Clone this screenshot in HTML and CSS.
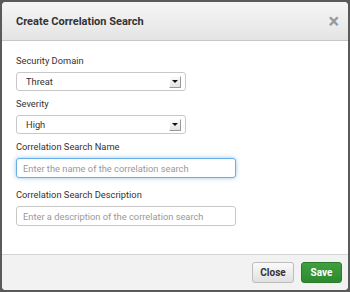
FILE: index.html
```html
<!DOCTYPE html>
<html lang="en">
<head>
    <meta charset="UTF-8">
    <title>Create Correlation Search</title>
    <link rel="stylesheet" href="styles.css">
</head>
<body>

    <div class="modal">
        <div class="modalHeader">
            <span class="modalTitle">Create Correlation Search</span>
            <span class="modalClose">&times;</span>
        </div>

        <div class="modalBody">
            <label class="fieldName">Security Domain</label>
            <div class="selectBox">
                <span class="selectValue">Threat</span>
                <span class="selectBtn"><span class="caret"></span></span>
            </div>

            <label class="fieldName">Severity</label>
            <div class="selectBox">
                <span class="selectValue">High</span>
                <span class="selectBtn"><span class="caret"></span></span>
            </div>

            <label class="fieldName">Correlation Search Name</label>
            <input class="textField focused" type="text" placeholder="Enter the name of the correlation search">

            <label class="fieldName fieldGap">Correlation Search Description</label>
            <input class="textField" type="text" placeholder="Enter a description of the correlation search">
        </div>

        <div class="modalFooter">
            <span class="btn btnClose">Close</span>
            <span class="btn btnSave">Save</span>
        </div>
    </div>

</body>
</html>
```

FILE: styles.css
```css
html {
    margin: 0;
    padding: 0;
}

body {
    margin: 0;
    padding: 2px 2px 2px 2px;
    background-color: #5a5a5a;
    font-family: Roboto, "Liberation Sans", sans-serif;
    color: #333;
    height: 292px;
    box-sizing: border-box;
    overflow: hidden;
}

.modal {
    display: flex;
    flex-direction: column;
    height: 288px;
    background-color: #fff;
    border-radius: 4px;
    overflow: hidden;
}

.modalHeader {
    display: flex;
    align-items: center;
    justify-content: space-between;
    height: 38px;
    padding: 0 9px 0 14px;
    background: linear-gradient(#f6f6f6, #e4e4e4);
    border-bottom: 1px solid #c6c6c6;
}

.modalTitle {
    font-size: 11px;
    font-weight: bold;
    color: #333;
}

.modalClose {
    font-size: 20px;
    font-weight: bold;
    color: #999;
    line-height: 20px;
}

.modalBody {
    flex: 1;
    display: flex;
    flex-direction: column;
    align-items: flex-start;
    padding: 13px 14px 0 14px;
}

.fieldName {
    font-size: 9.3px;
    color: #333;
    line-height: 14px;
    margin-bottom: 4px;
}

.fieldGap {
    margin-top: 4px;
}

.selectBox {
    box-sizing: border-box;
    display: flex;
    align-items: center;
    justify-content: space-between;
    width: 170px;
    height: 19px;
    margin-bottom: 6px;
    padding: 0 4px 0 9px;
    border: 1px solid #c8c8c8;
    border-radius: 3px;
    font-size: 9.3px;
    color: #333;
}

.selectBtn {
    box-sizing: border-box;
    display: flex;
    align-items: center;
    justify-content: center;
    width: 12px;
    height: 12px;
    background: linear-gradient(#fafafa, #e2e2e2);
    border-right: 1px solid #999;
    border-bottom: 1px solid #999;
    border-top: 1px solid #fff;
    border-left: 1px solid #fff;
}

.caret {
    width: 0;
    height: 0;
    border-left: 3px solid transparent;
    border-right: 3px solid transparent;
    border-top: 3px solid #111;
}

.textField {
    box-sizing: border-box;
    width: 220px;
    height: 20px;
    margin: 0 0 6px 0;
    padding: 0 6px;
    border: 1px solid #c8c8c8;
    border-radius: 3px;
    font-family: Roboto, "Liberation Sans", sans-serif;
    font-size: 9.3px;
    outline: none;
}

.textField::placeholder {
    color: #999;
}

.focused {
    border-color: #66afe9;
    box-shadow: 0 0 4px rgba(102, 175, 233, 0.7);
}

.modalFooter {
    display: flex;
    justify-content: flex-end;
    align-items: center;
    gap: 7px;
    height: 35px;
    padding: 0 6px 0 0;
    background-color: #f2f2f2;
    border-top: 1px solid #d6d6d6;
}

.btn {
    box-sizing: border-box;
    display: flex;
    align-items: center;
    justify-content: center;
    height: 21px;
    border-radius: 3px;
    font-size: 10px;
    font-weight: bold;
}

.btnClose {
    width: 42px;
    color: #333;
    background: linear-gradient(#fafafa, #e0e0e0);
    border: 1px solid #bdbdbd;
}

.btnSave {
    width: 41px;
    color: #fff;
    background: linear-gradient(#40a040, #2c8a2c);
    border: 1px solid #2a7a2a;
}
```
